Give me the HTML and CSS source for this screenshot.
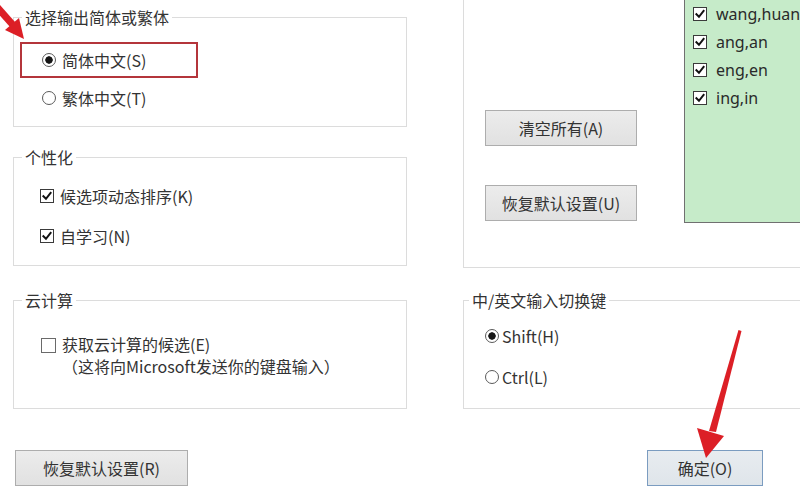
FILE: index.html
```html
<!DOCTYPE html>
<html lang="zh-CN">
<head>
<meta charset="utf-8">
<title>输入法设置</title>
<link rel="stylesheet" href="styles.css">
</head>
<body>
<div class="page">
  <div class="col left">
    <fieldset class="group g1">
      <legend>选择输出简体或繁体</legend>
      <div class="hl">
        <label class="opt"><span class="radio on"></span>简体中文(S)</label>
      </div>
      <label class="opt row2"><span class="radio"></span>繁体中文(T)</label>
    </fieldset>

    <fieldset class="group g2">
      <legend>个性化</legend>
      <label class="opt r1"><span class="cb"><svg viewBox="0 0 14 14"><path d="M2.8 7.2 L5.8 10.2 L11.2 3.4"/></svg></span>候选项动态排序(K)</label>
      <label class="opt r2"><span class="cb"><svg viewBox="0 0 14 14"><path d="M2.8 7.2 L5.8 10.2 L11.2 3.4"/></svg></span>自学习(N)</label>
    </fieldset>

    <fieldset class="group g3">
      <legend>云计算</legend>
      <div class="cloud">
        <span class="cb empty"></span>
        <div class="cloud-text">
          <div>获取云计算的候选(E)</div>
          <div>（这将向Microsoft发送你的键盘输入）</div>
        </div>
      </div>
    </fieldset>

    <button class="btn reset">恢复默认设置(R)</button>
  </div>

  <div class="col right">
    <div class="fuzzy">
      <div class="btns">
        <button class="btn wide">清空所有(A)</button>
        <button class="btn wide">恢复默认设置(U)</button>
      </div>
      <div class="green">
        <label class="gopt"><span class="cb"><svg viewBox="0 0 14 14"><path d="M2.8 7.2 L5.8 10.2 L11.2 3.4"/></svg></span>wang,huang</label>
        <label class="gopt"><span class="cb"><svg viewBox="0 0 14 14"><path d="M2.8 7.2 L5.8 10.2 L11.2 3.4"/></svg></span>ang,an</label>
        <label class="gopt"><span class="cb"><svg viewBox="0 0 14 14"><path d="M2.8 7.2 L5.8 10.2 L11.2 3.4"/></svg></span>eng,en</label>
        <label class="gopt"><span class="cb"><svg viewBox="0 0 14 14"><path d="M2.8 7.2 L5.8 10.2 L11.2 3.4"/></svg></span>ing,in</label>
      </div>
    </div>

    <fieldset class="group g4">
      <legend>中/英文输入切换键</legend>
      <label class="opt r1"><span class="radio on"></span>Shift(H)</label>
      <label class="opt r2"><span class="radio"></span>Ctrl(L)</label>
    </fieldset>

    <button class="btn ok">确定(O)</button>
  </div>

  <svg class="annot" viewBox="0 0 800 494" aria-hidden="true">
    <polygon class="arrow" points="-12,2 -7,-3 15,22 10,27"/>
    <polygon class="arrow" points="5,30 19,18 24,39"/>
    <polygon class="arrow" points="738.5,330 741.5,331 716,432 709,431"/>
    <polygon class="arrow" points="697,428 724,436 706,458"/>
  </svg>
</div>
</body>
</html>
```

FILE: styles.css
```css
html, body {
  margin: 0;
  height: 100%;
  overflow: hidden;
  background: #fff;
}

body {
  font-family: "Noto Sans CJK SC", "Noto Sans", sans-serif;
  font-size: 16px;
  color: #333;
}

.page {
  position: relative;
  display: flex;
  align-items: flex-start;
  width: 800px;
  height: 494px;
  overflow: hidden;
  padding-left: 13px;
  box-sizing: border-box;
}

.col {
  display: flex;
  flex-direction: column;
  align-items: flex-start;
  flex: none;
}

.left {
  width: 394px;
  padding-top: 7px;
}

.right {
  width: 420px;
  margin-left: 56px;
}

.group {
  margin: 0;
  padding: 0;
  border: 1px solid #dcdcdc;
  min-width: 0;
  width: 100%;
  box-sizing: border-box;
  display: flex;
  flex-direction: column;
  align-items: flex-start;
}

legend {
  padding: 0 3px;
  margin-left: 8px;
  line-height: 20px;
  font-size: 16px;
  color: #333;
}

.opt {
  display: flex;
  align-items: center;
  line-height: 20px;
  height: 20px;
  white-space: nowrap;
}

.radio {
  width: 14px;
  height: 14px;
  box-sizing: border-box;
  border: 1px solid #5a5a5a;
  border-radius: 50%;
  margin-right: 6px;
  background: #fff;
  flex: none;
}

.radio.on {
  background: radial-gradient(circle, #151515 0, #151515 3.4px, #fff 4px);
}

.cb {
  width: 14px;
  height: 14px;
  box-sizing: border-box;
  border: 1px solid #3a3a3a;
  background: #fff;
  margin-right: 6px;
  flex: none;
  display: flex;
}

.cb svg {
  width: 12px;
  height: 12px;
}

.cb path {
  fill: none;
  stroke: #111;
  stroke-width: 2.3;
  stroke-linecap: square;
}

.cb.empty {
  width: 15px;
  height: 15px;
  border-color: #6a6a6a;
}

/* group 1 */
.g1 {
  padding-bottom: 18px;
}

.hl {
  margin: 15px 0 0 6px;
  width: 178px;
  height: 36px;
  box-sizing: border-box;
  border: 2px solid #b4353b;
  padding-left: 20px;
  display: flex;
  align-items: center;
}

.g1 .row2 {
  margin: 10px 0 0 28px;
}

/* group 2 */
.g2 {
  margin-top: 20px;
  padding-bottom: 19px;
}

.g2 .r1 {
  margin: 19px 0 0 26px;
}

.g2 .r2 {
  margin: 20px 0 0 26px;
}

/* group 3 */
.g3 {
  margin-top: 24px;
  padding-bottom: 31px;
}

.cloud {
  display: flex;
  align-items: flex-start;
  margin: 23px 0 0 27px;
  line-height: 22px;
}

.cloud .cb {
  margin-top: 5px;
  margin-right: 6px;
}

.cloud-text {
  white-space: nowrap;
}

/* buttons */
.btn {
  font-family: inherit;
  font-size: 16px;
  color: #333;
  background: linear-gradient(#ececec, #e1e1e1);
  border: 1px solid #adadad;
  padding: 0;
  height: 36px;
  box-sizing: border-box;
  flex: none;
}

.reset {
  margin: 41px 0 0 2px;
  width: 173px;
}

/* right column */
.fuzzy {
  display: flex;
  height: 268px;
  width: 100%;
  box-sizing: border-box;
  border-left: 1px solid #dcdcdc;
  border-bottom: 1px solid #dcdcdc;
}

.btns {
  width: 220px;
  padding: 110px 0 0 21px;
  box-sizing: border-box;
  display: flex;
  flex-direction: column;
  gap: 39px;
  flex: none;
}

.wide {
  width: 152px;
}

.green {
  flex: 1;
  height: 223px;
  box-sizing: border-box;
  background: #c6ebc9;
  border-left: 1px solid #707070;
  border-bottom: 1px solid #707070;
  padding: 0 0 0 8px;
  display: flex;
  flex-direction: column;
}

.gopt {
  display: flex;
  align-items: center;
  height: 28px;
  white-space: nowrap;
  font-family: "Noto Sans", "Noto Sans CJK SC", sans-serif;
  font-size: 16px;
  color: #2a2a2a;
}

.gopt .cb {
  margin-right: 9px;
}

.g4 {
  margin-top: 22px;
  padding-bottom: 21px;
}

.g4 legend {
  margin-left: 5px;
}

.g4 .r1 {
  margin: 16px 0 0 21px;
}

.g4 .r2 {
  margin: 21px 0 0 21px;
}

.g4 .radio {
  margin-right: 3px;
}

.ok {
  margin: 41px 0 0 184px;
  width: 116px;
  background: linear-gradient(#e8ecf0, #dfe5ea);
  border-color: #7b9cc0;
}

/* annotation overlay */
.annot {
  position: absolute;
  left: 0;
  top: 0;
  width: 800px;
  height: 494px;
  pointer-events: none;
}

.arrow {
  fill: #dc1f26;
}
```
